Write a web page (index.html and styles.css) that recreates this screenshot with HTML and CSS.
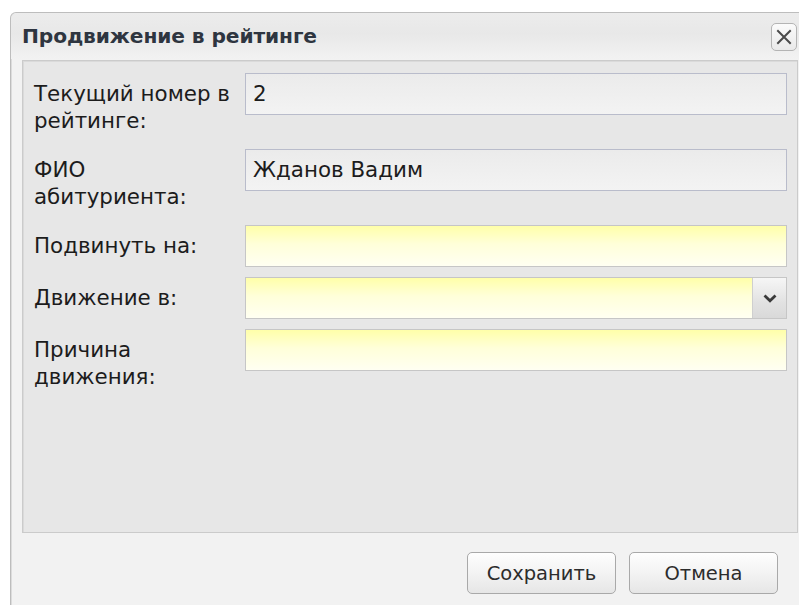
FILE: index.html
```html
<!DOCTYPE html>
<html lang="ru">
<head>
<meta charset="utf-8">
<title>Продвижение в рейтинге</title>
<link rel="stylesheet" href="styles.css">
</head>
<body>
<div class="window">
  <div class="window-header">
    <span class="window-title">Продвижение в рейтинге</span>
    <button class="tool-close" type="button" aria-label="Закрыть">
      <svg width="16" height="16" viewBox="0 0 16 16"><path d="M2 2 L14 14 M14 2 L2 14" stroke="#4a4a4a" stroke-width="2" fill="none" stroke-linecap="square"/></svg>
    </button>
  </div>
  <div class="window-body">
    <div class="form-panel">
      <div class="form-row">
        <label class="field-label">Текущий номер в рейтинге:</label>
        <div class="field readonly">2</div>
      </div>
      <div class="form-row">
        <label class="field-label">ФИО абитуриента:</label>
        <div class="field readonly">Жданов Вадим</div>
      </div>
      <div class="form-row">
        <label class="field-label">Подвинуть на:</label>
        <div class="field required"></div>
      </div>
      <div class="form-row">
        <label class="field-label">Движение в:</label>
        <div class="field required combo">
          <span class="combo-input"></span>
          <span class="combo-trigger">
            <svg width="14" height="9" viewBox="0 0 14 9"><path d="M1.5 1.5 L7 6.8 L12.5 1.5" stroke="#3a3a3a" stroke-width="2.8" fill="none"/></svg>
          </span>
        </div>
      </div>
      <div class="form-row">
        <label class="field-label">Причина движения:</label>
        <div class="field required"></div>
      </div>
    </div>
    <div class="window-footer">
      <button class="btn" type="button">Сохранить</button>
      <button class="btn" type="button">Отмена</button>
    </div>
  </div>
</div>
</body>
</html>
```

FILE: styles.css
```css
html, body {
  margin: 0;
  padding: 0;
  background: #ffffff;
  overflow: hidden;
  height: 605px;
}

body {
  font-family: "DejaVu Sans", Verdana, sans-serif;
  color: #1e1e1e;
}

.window {
  margin: 12px 0 0 10px;
  width: 798px;
  height: 620px;
  border: 1px solid #bdbdbd;
  border-bottom: none;
  border-radius: 6px 6px 0 0;
  box-shadow: inset 1px 0 0 #dcdcdc;
  background: #f2f2f2;
  display: flex;
  flex-direction: column;
}

.window-header {
  height: 46px;
  display: flex;
  align-items: center;
  justify-content: space-between;
  padding: 0 12px 0 11px;
  background: linear-gradient(#ececec, #e8e8e8 45%, #f2f2f2);
  border-radius: 6px 6px 0 0;
}

.window-title {
  font-weight: bold;
  font-size: 20.2px;
  color: #2e3540;
  letter-spacing: -0.1px;
}

.tool-close {
  width: 26px;
  height: 28px;
  padding: 0;
  margin-top: 2px;
  border: 1px solid #b4b4b4;
  border-radius: 5px;
  background: linear-gradient(#fbfbfb, #e9e9e9);
  display: flex;
  align-items: center;
  justify-content: center;
}

.window-body {
  padding: 1px 11px 0 11px;
  display: flex;
  flex-direction: column;
}

.form-panel {
  height: 459px;
  border: 1px solid #cbcbcb;
  box-shadow: inset 1px 1px 0 #dadada;
  background: #e7e7e7;
  padding: 12px 10px 0 11px;
  display: grid;
  grid-template-columns: 211px 1fr;
  grid-auto-rows: min-content;
  row-gap: 10px;
}

.form-row {
  display: contents;
}

.field-label {
  font-size: 21.4px;
  line-height: 27px;
  padding: 7px 9px 5px 0;
  color: #1c1c1c;
}

.field {
  box-sizing: border-box;
  height: 42px;
  font-size: 21.4px;
  line-height: 40px;
  padding: 0 7px;
}

.field.readonly {
  border: 1px solid #b9bccb;
  background: linear-gradient(#ebebeb, #f3f3f3);
  color: #1c1c1c;
}

.field.required {
  border: 1px solid #c6c6c6;
  background: linear-gradient(#ffffa9, #ffffd9 45%, #fffff2);
}

.field.combo {
  display: flex;
  padding: 0;
}

.combo-input {
  flex: 1;
}

.combo-trigger {
  width: 33px;
  border-left: 1px solid #cfcfcf;
  background: linear-gradient(#f6f6f6, #e2e2e2 60%, #d9d9d9);
  display: flex;
  align-items: center;
  justify-content: center;
}

.window-footer {
  display: flex;
  justify-content: flex-end;
  gap: 13px;
  padding: 19px 20px 0 0;
}

.btn {
  width: 149px;
  height: 42px;
  border: 1px solid #a9a9a9;
  border-radius: 5px;
  background: linear-gradient(#fefefe, #f3f3f3 50%, #e6e6e6);
  font-family: "DejaVu Sans", Verdana, sans-serif;
  font-size: 19.5px;
  color: #2c2c2c;
  padding: 0;
}
```
